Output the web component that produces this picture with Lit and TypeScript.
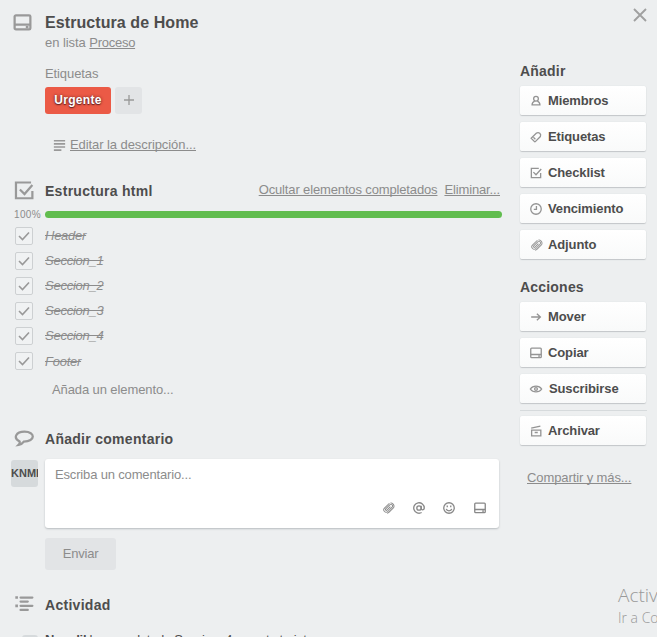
import { LitElement, html, css, svg } from "lit";
import { customElement } from "lit/decorators.js";

const icons: Record<string, unknown> = {
  card: svg`<rect x="2" y="2.500" width="12" height="10.800" rx="1"/><path d="M2 9.700h12M10.500 11.500h2"/>`,
  check: svg`<path d="M13.300 8v5.300H2.700V2.700h8.500M5 7l3 3 6-6.500"/>`,
  bigcheck: svg`<path d="M14 8.300V13.900H1.500V1.900H13M4.500 7.200l3.500 3.500L14 3.800"/>`,
  member: svg`<circle cx="8" cy="5.500" r="2.700"/><path d="M6.500 8.200C4.500 9 3.500 10 3.500 12.500h9C12.500 10 11.500 9 9.500 8.200"/>`,
  tag: svg`<path d="M2.500 9.500L8.500 3.500q2-1 3.800.2 1.700 1.500.7 3.800L7.500 13c-.5.500-1 .5-1.500 0L2.500 9.500z"/><path d="M5 8.200l2.300 2.300"/>`,
  clock: svg`<circle cx="8" cy="8" r="6"/><path d="M8.500 4.500V8.500H5.500"/>`,
  clip: svg`<g transform="rotate(-45 8 8)" stroke-width="1.100"><path d="M13 5.300H5a2.700 2.700 0 0 0 0 5.400h7a1.900 1.900 0 0 0 0-3.800H5.500a1 1 0 0 0 0 2H11"/><path d="M3 11.500q1 .8 2.500.8h6.500a3.500 3.500 0 0 0 2-6.300"/></g>`,
  arrow: svg`<path d="M2.500 8h10.500M9 4.200L13 8l-4 3.800"/>`,
  eye: svg`<path d="M1.500 8C4.500 3.500 11.500 3.500 14.500 8C11.500 12.500 4.500 12.500 1.500 8z"/><circle cx="8" cy="8" r="1.600"/>`,
  archive: svg`<path d="M2.500 4.800l10.500-2.300M3 7h10.500v6.500H3zM6.500 9.700h3.500"/>`,
  smile: svg`<circle cx="8" cy="8" r="6"/><path d="M6 5v2M10 5v2M4.800 9c.8 3 5.600 3 6.400 0"/>`,
  at: svg`<circle cx="8" cy="8" r="2.500"/><path d="M10.500 5.300v3.400c0 2 3.500 2 3.500-.7A6 6 0 1 0 11 13.200"/>`,
  lines: svg`<path d="M2 3h12M2 6.300h12M2 9.600h12M2 12.900h8"/>`,
  bubble: svg`<path d="M4.300 10.300C-1 7.500 1.500 2.800 8 2.800c8.500 0 8.500 7.500-.5 7.500-1 1.500-2.300 2.200-4 2.500.7-.7 1-1.600.8-2.500z"/>`,
  activity: svg`<path d="M5 2.700h9M5 5.800h5.500M5 9h9M5 12.100h5.500" stroke-linecap="round"/><path d="M1 2.700h2M1 9h2" stroke-width="2"/>`,
};
const icon = (name: string, cls = "") =>
  html`<svg class="ico ${cls}" viewBox="0 0 16 16">${icons[name]}</svg>`;

const button = (name: string, text: string, cls = "") =>
  html`<div class="btn ${cls}">${icon(name)}<span>${text}</span></div>`;

@customElement("app-root")
export class AppRoot extends LitElement {
  static styles = css`
    :host { display: block; position: relative; height: 637px; overflow: hidden; background: #edeff0;
      font: 13px/16px "Liberation Sans", Arial, sans-serif; color: #8c8c8c; white-space: nowrap;
      text-decoration-skip-ink: none; }
    * { box-sizing: border-box; }
    .layout { display: grid; grid-template-columns: 502px 126px; column-gap: 18px; }
    .u { text-decoration: underline; }
    .ico { display: block; flex: none; width: 16px; height: 16px; fill: none; stroke: #999; stroke-width: 1.7; }
    .row { display: flex; align-items: center; }
    .gutter { width: 45px; padding-left: 14px; flex: none; }
    h1, h2, h3 { margin: 0; color: #4d4d4d; font-weight: bold; }
    h1 { font-size: 16px; line-height: 20px; letter-spacing: .08px; }
    h2 { font-size: 14px; line-height: 18px; letter-spacing: .28px; }
    h3 { font-size: 14px; line-height: 18px; letter-spacing: .2px; }
    .head { padding-top: 12px; }
    .head .gutter { padding-left: 12px; }
    .i21 { width: 21px; height: 21px; }
    .indent { padding-left: 45px; }
    .sub { margin-top: 2px; letter-spacing: -.05px; }
    .sub .u { letter-spacing: -.28px; }
    .cap { margin-top: 15px; letter-spacing: -.1px; }
    .labels { margin-top: 5px; height: 27px; gap: 4px; }
    .label { width: 66px; height: 27px; border-radius: 3px; background: #eb5a46; color: #fff; font-weight: bold; font-size: 12px; letter-spacing: .28px; line-height: 26px; text-align: center; text-shadow: 0 0 3px #622, 0 1px 1px #622; }
    .plus { width: 27px; height: 27px; border-radius: 3px; background: #e2e4e6; display: grid; place-items: center; }
    .plus svg { width: 12px; height: 12px; margin-top: -2px; fill: none; stroke: #999; stroke-width: 1.3; }
    .desc { margin-top: 23px; padding-left: 52px; gap: 3px; letter-spacing: -.08px; }
    .desc .ico { width: 15px; height: 15px; }
    .chead { margin-top: 26px; height: 24px; }
    .chead .ico { margin-top: -2px; }
    .links { margin-left: auto; margin-right: 2px; display: flex; gap: 7px; margin-top: -3px; letter-spacing: -.14px; }
    .prog { margin-top: 4px; height: 15px; }
    .pct { width: 45px; padding-left: 14px; font-size: 10px; letter-spacing: .35px; }
    .bar { flex: 1; height: 7px; border-radius: 4px; background: #61bd4f; }
    .items { margin-top: 1px; }
    .item { height: 25.150px; font-style: italic; letter-spacing: -.25px; }
    .item span { text-decoration: line-through; margin-top: .6px; }
    .box { width: 18px; height: 18px; margin: 0 12px 0 15px; border: 1px solid #cdd0d2; border-radius: 2px; background: #f0f2f3; display: grid; place-items: center; flex: none; }
    .box svg { width: 12px; height: 10px; fill: none; stroke: #999; stroke-width: 1.600; }
    .add { margin: 8px 0 0 52px; letter-spacing: -.1px; }
    .comhead { margin-top: 31px; height: 20px; }
    .com { display: flex; margin-top: 10px; }
    .ava { width: 27px; height: 27px; margin: 1px 7px 0 11px; border-radius: 3px; background: #d6dadc; color: #4d4d4d; font-weight: bold; font-size: 11px; line-height: 27px; overflow: hidden; flex: none; }
    .input { width: 454px; height: 69px; border-radius: 3px; background: #fff; box-shadow: 0 1px 2px #b8bcbf; padding: 8px 12px 0 10px; display: flex; flex-direction: column; justify-content: space-between; letter-spacing: -.16px; }
    .tools { display: flex; justify-content: flex-end; gap: 16.700px; padding-bottom: 13px; }
    .tools .ico { width: 14px; height: 14px; stroke: #888; stroke-width: 1.500; }
    .send { margin: 10px 0 0 45px; width: 71px; height: 32px; border-radius: 3px; background: #e2e4e6; text-align: center; line-height: 31px; letter-spacing: -.2px; }
    .acthead { margin-top: 24px; height: 22px; }
    .act { margin-top: 16px; height: 20px; color: #4d4d4d; display: flex; letter-spacing: -.3px; }
    .act i { width: 16px; height: 20px; margin: 3px 7px 0 22px; background: #d6dadc; border-radius: 3px; }
    aside { padding-top: 62px; }
    .group { display: grid; row-gap: 7px; margin-top: 6px; }
    .btn { height: 29px; border-radius: 2px; background: linear-gradient(#fff, #f9fafa); box-shadow: 0 1px 1px #c3c6c8, 0 0 1px #ced1d3; display: flex; align-items: center; padding-left: 9px; gap: 5px; color: #4d4d4d; font-weight: bold; letter-spacing: -.12px; }
    .btn .ico { width: 14px; height: 14px; stroke: #949494; stroke-width: 1.500; }
    .wide { gap: 6px; }
    .second { margin-top: 19px; }
    hr { border: 0; border-top: 1px solid #d6dadc; margin: 7px 0 5px; width: 127px; }
    .share { margin: 25px 0 0 7px; letter-spacing: -.1px; }
    .close { position: absolute; left: 633px; top: 8px; width: 14px; height: 14px; fill: none; stroke: #a0a0a0; stroke-width: 1.900; }
    .mark { position: absolute; left: 618px; top: 583px; font-family: "Open Sans", sans-serif; font-weight: 300; color: #999; font-size: 19px; line-height: 24px; }
    .mark div + div { font-size: 14px; line-height: 20px; margin-top: 1px; }
  `;

  render() {
    const items = ["Header", "Seccion_1", "Seccion_2", "Seccion_3", "Seccion_4", "Footer"];
    return html`
      <div class="layout">
        <main>
          <div class="row head"><div class="gutter">${icon("card", "i21")}</div><h1>Estructura de Home</h1></div>
          <div class="indent sub">en lista <span class="u">Proceso</span></div>
          <div class="indent cap">Etiquetas</div>
          <div class="row indent labels"><div class="label">Urgente</div>
            <div class="plus"><svg viewBox="0 0 12 12"><path d="M6 1v10M1 6h10" /></svg></div></div>
          <div class="row desc">${icon("lines")}<span class="u">Editar la descripción...</span></div>
          <div class="row chead"><div class="gutter">${icon("bigcheck", "i21")}</div><h2>Estructura html</h2>
            <div class="links"><span class="u">Ocultar elementos completados</span><span class="u">Eliminar...</span></div></div>
          <div class="row prog"><span class="pct">100%</span><div class="bar"></div></div>
          <div class="items">${items.map((t) => html`<div class="row item">
            <div class="box"><svg viewBox="0 0 12 10"><path d="M1 5l3.500 3.500L11 1.500" /></svg></div><span>${t}</span></div>`)}</div>
          <div class="add">Añada un elemento...</div>
          <div class="row comhead"><div class="gutter">${icon("bubble", "i21")}</div><h2>Añadir comentario</h2></div>
          <div class="com"><div class="ava">KNMI</div>
            <div class="input"><span>Escriba un comentario...</span>
              <div class="tools">${["clip", "at", "smile", "card"].map((n) => icon(n))}</div></div></div>
          <div class="send">Enviar</div>
          <div class="row acthead"><div class="gutter">${icon("activity", "i21")}</div><h2>Actividad</h2></div>
          <div class="act"><i></i><span><b>Noe dil</b> ha completado Seccion_4 en esta tarjeta</span></div>
        </main>
        <aside>
          <h3>Añadir</h3>
          <div class="group">
            ${button("member", "Miembros")}${button("tag", "Etiquetas")}${button("check", "Checklist")}
            ${button("clock", "Vencimiento")}${button("clip", "Adjunto")}
          </div>
          <h3 class="second">Acciones</h3>
          <div class="group">
            ${button("arrow", "Mover")}${button("card", "Copiar")}${button("eye", "Suscribirse", "wide")}
          </div>
          <hr />
          ${button("archive", "Archivar")}
          <div class="share u">Compartir y más...</div>
        </aside>
      </div>
      <svg class="close" viewBox="0 0 14 14"><path d="M1 1l12 12M13 1L1 13" /></svg>
      <div class="mark"><div>Activar Windows</div><div>Ir a Configuración</div></div>
    `;
  }
}
